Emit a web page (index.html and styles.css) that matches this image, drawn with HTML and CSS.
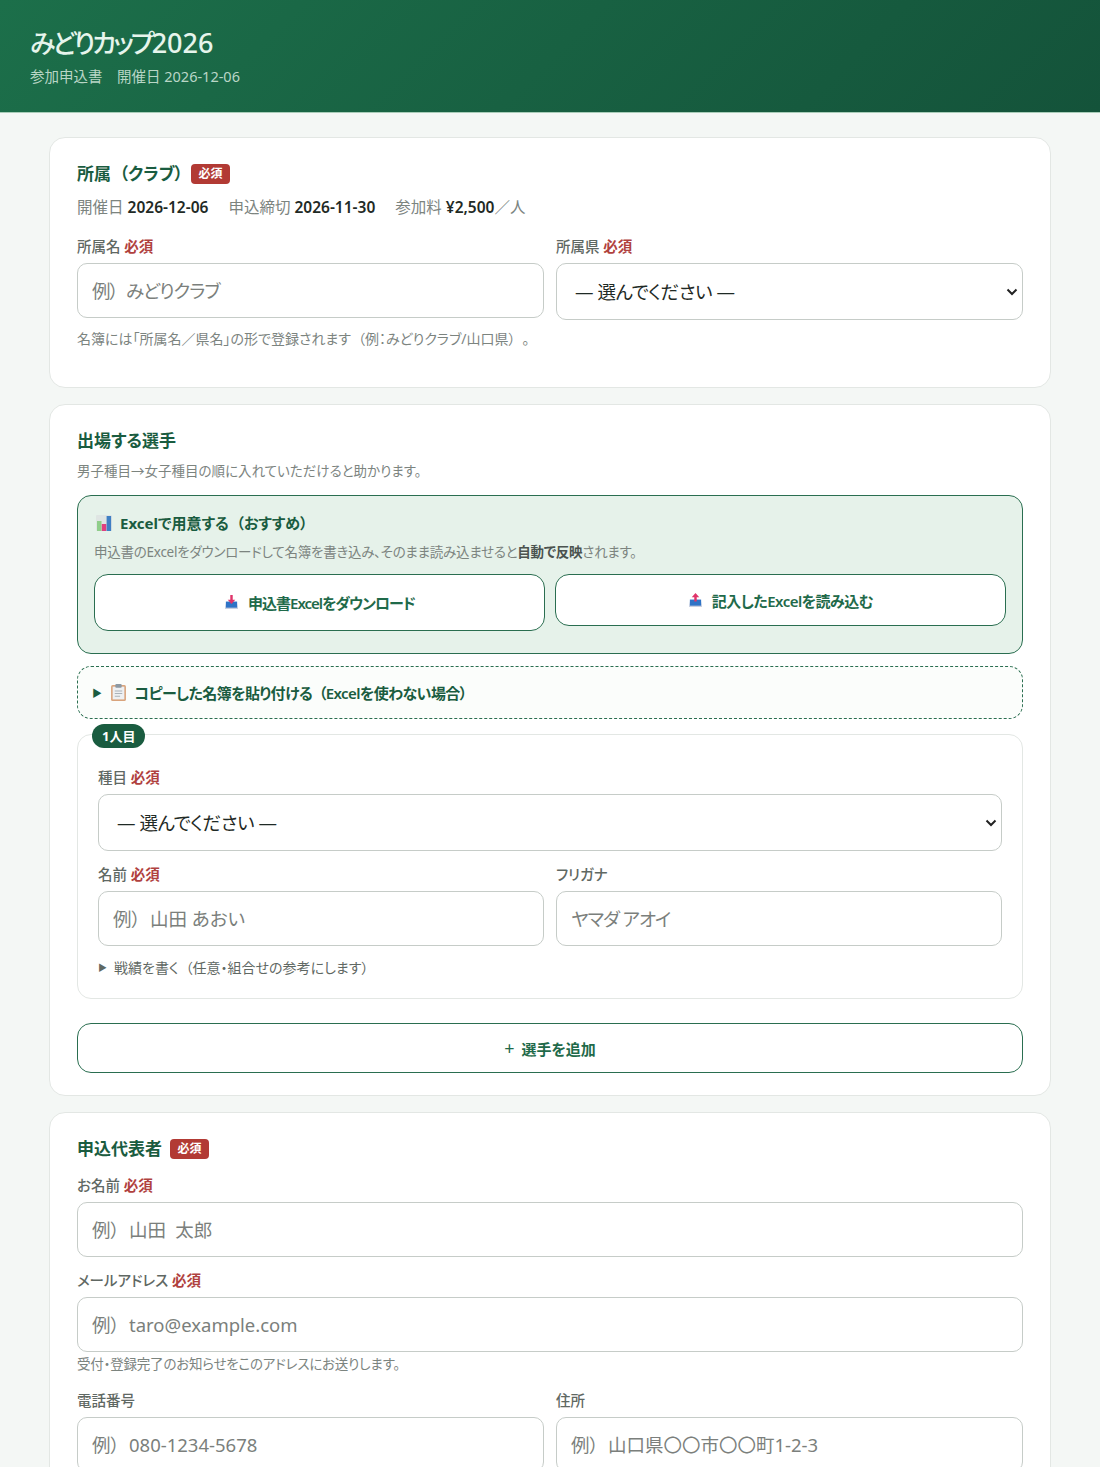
FILE: index.html
```html
<!DOCTYPE html>
<html lang="ja">
<head>
  <meta charset="UTF-8">
  <meta name="viewport" content="width=device-width, initial-scale=1.0">
  <title>みどりカップ2026 参加申込書</title>
  <link rel="stylesheet" href="styles.css">
</head>
<body>

  <header class="site-header">
    <h1><span class="title-kana">みどりカップ</span>2026</h1>
    <p>参加申込書　開催日 2026-12-06</p>
  </header>

  <main class="wrap">

    <section class="card card-club">
      <h2 class="card-title">所属&ensp;（クラブ）<span class="badge">必須</span></h2>
      <p class="meta">
        <span>開催日 <b>2026-12-06</b></span>
        <span>申込締切 <b>2026-11-30</b></span>
        <span>参加料 <b>¥2,500</b>／人</span>
      </p>
      <div class="two-col">
        <div class="field">
          <label>所属名 <em>必須</em></label>
          <input class="tight" type="text" placeholder="例）&ensp;みどりクラブ">
        </div>
        <div class="field">
          <label>所属県 <em>必須</em></label>
          <select><option>— 選んでください —</option></select>
        </div>
      </div>
      <p class="hint">名簿には「所属名／県名」の形で登録されます&ensp;（例：みどりクラブ/山口県）&ensp;。</p>
    </section>

    <section class="card card-players">
      <h2 class="card-title">出場する選手</h2>
      <p class="hint lead">男子種目→女子種目の順に入れていただけると助かります。</p>

      <div class="excel-box">
        <h3>
          <svg class="icon icon-chart" viewBox="0 0 16 16">
            <rect x="0" y="0" width="16" height="16" rx="1" fill="#dfe5e3"/>
            <rect x="1" y="6" width="4.5" height="10" fill="#8fce8a"/>
            <rect x="5.8" y="9" width="4.5" height="7" fill="#e0407f"/>
            <rect x="10.6" y="1" width="4.5" height="15" fill="#3f7fc4"/>
          </svg>
          Excelで用意する&ensp;（おすすめ）
        </h3>
        <p class="excel-desc">申込書のExcelをダウンロードして名簿を書き込み、そのまま読み込ませると<b>自動で反映</b>されます。</p>
        <div class="excel-actions">
          <button class="btn btn-tall" type="button">
            <svg class="icon" viewBox="0 0 16 16">
              <path d="M2 9h12l1 6H1z" fill="#c9cfe0"/>
              <path d="M2 7h12v6.5H2z" fill="#2f73c6"/>
              <path d="M6.7 0h2.6v5H12L8 9.5 4 5h2.7z" fill="#e0346a"/>
            </svg>
            申込書Excelをダウンロード
          </button>
          <button class="btn" type="button">
            <svg class="icon" viewBox="0 0 16 16">
              <path d="M2 9h12l1 6H1z" fill="#c9cfe0"/>
              <path d="M2 7h12v6.5H2z" fill="#2f73c6"/>
              <path d="M8 0l4 4.5H9.3V9H6.7V4.5H4z" fill="#e0346a"/>
            </svg>
            記入したExcelを読み込む
          </button>
        </div>
      </div>

      <div class="paste-box">
        <span class="arrow">▶</span>
        <svg class="icon icon-clip" viewBox="0 0 14 16">
          <rect x="0" y="1" width="14" height="15" rx="1.5" fill="#d9a47c"/>
          <rect x="1.5" y="2.5" width="11" height="12" fill="#eef0f2"/>
          <rect x="4" y="0" width="6" height="3.5" rx="1" fill="#8d99a3"/>
          <path d="M3.5 6.5h7M3.5 9h7M3.5 11.5h5" stroke="#aab2b8" stroke-width="1"/>
        </svg>
        コピーした名簿を貼り付ける&ensp;（Excelを使わない場合）
      </div>

      <div class="player">
        <span class="player-num">1人目</span>
        <div class="field">
          <label>種目 <em>必須</em></label>
          <select><option>— 選んでください —</option></select>
        </div>
        <div class="two-col player-names">
          <div class="field">
            <label>名前 <em>必須</em></label>
            <input type="text" placeholder="例）&ensp;山田 あおい">
          </div>
          <div class="field">
            <label>フリガナ</label>
            <input class="tight" type="text" placeholder="ヤマダ アオイ">
          </div>
        </div>
        <div class="record-toggle"><span class="arrow">▶</span>戦績を書く&ensp;（任意・組合せの参考にします）</div>
      </div>

      <button class="btn btn-add" type="button"><span class="plus">+</span>選手を追加</button>
    </section>

    <section class="card card-rep">
      <h2 class="card-title">申込代表者<span class="badge">必須</span></h2>
      <div class="field rep-field">
        <label>お名前 <em>必須</em></label>
        <input type="text" placeholder="例）&ensp;山田&ensp;太郎">
      </div>
      <div class="field rep-field">
        <label>メールアドレス <em>必須</em></label>
        <input type="text" placeholder="例）&ensp;taro@example.com">
        <p class="hint mail-hint">受付・登録完了のお知らせをこのアドレスにお送りします。</p>
      </div>
      <div class="two-col">
        <div class="field">
          <label>電話番号</label>
          <input type="text" placeholder="例）&ensp;080-1234-5678">
        </div>
        <div class="field">
          <label>住所</label>
          <input type="text" placeholder="例）&ensp;山口県〇〇市〇〇町1-2-3">
        </div>
      </div>
    </section>

  </main>

</body>
</html>
```

FILE: styles.css
```css
* {
  box-sizing: border-box;
}

body {
  font-family: "Noto Sans", "Noto Sans CJK JP", sans-serif;
  font-feature-settings: "palt";
  background-color: #f4f7f5;
  color: #1f2a25;
  margin: 0;
  padding: 0;
}

.site-header {
  height: 113px;
  padding: 25px 30px 0;
  background: linear-gradient(135deg, #1c6f4a, #14533a);
  border-bottom: 1px solid #a9cdb9;
  color: #e6f5ec;
}

.site-header h1 {
  margin: 0;
  font-size: 27px;
  line-height: 36px;
  font-weight: 500;
}

.title-kana {
  font-size: 26px;
  letter-spacing: -3px;
}

.site-header p {
  margin: 5px 0 0;
  font-size: 14.5px;
  line-height: 20px;
  color: #b9d6c6;
}

.wrap {
  padding: 24px 49px 40px;
  display: flex;
  flex-direction: column;
  gap: 16px;
}

.card {
  background-color: #fff;
  border: 1px solid #e3e7e4;
  border-radius: 16px;
  padding: 24px 27px 22px;
}

.card-title {
  margin: 0;
  font-size: 17px;
  line-height: 24px;
  font-weight: 700;
  color: #1a5c40;
  display: flex;
  align-items: center;
}

.badge {
  margin-left: 8px;
  padding: 0 7.5px;
  height: 20px;
  line-height: 20px;
  font-size: 12px;
  font-weight: 700;
  color: #fff;
  background-color: #b23a34;
  border-radius: 4px;
}

.meta {
  margin: 10px 0 0;
  font-size: 15.5px;
  line-height: 22px;
  color: #7c847f;
  display: flex;
  gap: 20px;
}

.meta b {
  color: #1f2a25;
  font-weight: 600;
}

.two-col {
  display: grid;
  grid-template-columns: 1fr 1fr;
  gap: 12px;
  align-items: start;
}

.card-club .two-col {
  margin-top: 18px;
}

.field label {
  display: block;
  font-size: 14.5px;
  line-height: 20px;
  font-weight: 500;
  color: #5f6863;
  margin-bottom: 7px;
}

.field em {
  font-style: normal;
  font-weight: 700;
  color: #b0413e;
}

input, select {
  width: 100%;
  display: block;
  font-family: inherit;
  font-feature-settings: "palt";
  font-size: 18.5px;
  color: #1f2a25;
  background-color: #fff;
  border: 1px solid #c6ccc8;
  border-radius: 10px;
}

input {
  height: 55px;
  padding: 0 14px;
}

input.tight {
  letter-spacing: -1px;
}

input::placeholder {
  color: #7b7f7c;
}

select {
  height: 57px;
  padding: 0 14px 0 18px;
  letter-spacing: -0.4px;
  appearance: none;
  background-image: url("data:image/svg+xml,%3Csvg xmlns='http://www.w3.org/2000/svg' viewBox='0 0 12 8'%3E%3Cpath d='M1.5 1.5 6 6l4.5-4.5' fill='none' stroke='%23222' stroke-width='2'/%3E%3C/svg%3E");
  background-repeat: no-repeat;
  background-position: right 4px center;
  background-size: 12px 8px;
}

.hint {
  margin: 9px 0 0;
  font-size: 14px;
  line-height: 20px;
  color: #7c847f;
}

.card-club {
  padding-bottom: 38px;
}

.lead {
  margin-top: 8px;
  font-size: 13.5px;
}

.excel-box {
  margin-top: 14px;
  height: 159px;
  padding: 15px 16px 0;
  background-color: #e6f2ea;
  border: 1.5px solid #2a6e50;
  border-radius: 14px;
}

.excel-box h3 {
  margin: 0;
  font-size: 15px;
  line-height: 24px;
  font-weight: 700;
  color: #1a5c40;
  display: flex;
  align-items: center;
}

.icon {
  width: 15px;
  height: 15px;
  margin-right: 9px;
  flex: none;
}

.icon-chart {
  width: 16px;
  height: 16px;
  margin: 0 8px 0 2px;
}

.excel-desc {
  margin: 7px 0 0;
  font-size: 13.5px;
  line-height: 20px;
  letter-spacing: -0.25px;
  color: #7c847f;
}

.excel-desc b {
  color: #4b534f;
  font-weight: 600;
}

.excel-actions {
  margin-top: 12px;
  display: grid;
  grid-template-columns: 1fr 1fr;
  gap: 10px;
  align-items: start;
}

.btn {
  width: 100%;
  height: 52px;
  display: flex;
  align-items: center;
  justify-content: center;
  font-family: inherit;
  font-feature-settings: "palt";
  font-size: 15px;
  letter-spacing: -0.5px;
  font-weight: 600;
  color: #1f6a4a;
  background-color: #fff;
  border: 1.5px solid #2a6e50;
  border-radius: 14px;
}

.btn-tall {
  height: 57px;
  letter-spacing: -1px;
}

.paste-box {
  margin-top: 12px;
  height: 53px;
  padding: 0 14px;
  display: flex;
  align-items: center;
  font-size: 15px;
  letter-spacing: -0.6px;
  font-weight: 600;
  color: #1a5c40;
  background-color: #fbfdfb;
  border: 1.5px dashed #2a6e50;
  border-radius: 14px;
}

.arrow {
  font-size: 10px;
  margin-right: 10px;
}

.icon-clip {
  height: 17px;
  margin-right: 8px;
}

.player {
  position: relative;
  margin-top: 15px;
  height: 265px;
  padding: 32px 20px 0;
  border: 1px solid #e3e7e4;
  border-radius: 14px;
}

.player-num {
  position: absolute;
  left: 14px;
  top: -11px;
  height: 24px;
  line-height: 24px;
  padding: 0 10px;
  font-size: 13px;
  font-weight: 700;
  color: #fff;
  background-color: #1a5c40;
  border-radius: 12px;
}

.player-names {
  margin-top: 13px;
}

.record-toggle {
  margin-top: 12px;
  font-size: 14px;
  line-height: 20px;
  color: #5f6863;
  display: flex;
  align-items: center;
}

.record-toggle .arrow {
  font-size: 9px;
  margin-right: 7px;
}

.btn-add {
  margin-top: 24px;
  height: 50px;
  letter-spacing: 0;
}

.plus {
  margin-right: 7px;
  font-size: 18px;
  font-weight: 400;
}

.rep-field {
  margin-top: 14px;
}

.rep-field + .rep-field {
  margin-top: 13px;
}

.mail-hint {
  margin-top: 2px;
  font-size: 13.5px;
  letter-spacing: -0.2px;
}

.rep-field + .two-col {
  margin-top: 16px;
}
```
